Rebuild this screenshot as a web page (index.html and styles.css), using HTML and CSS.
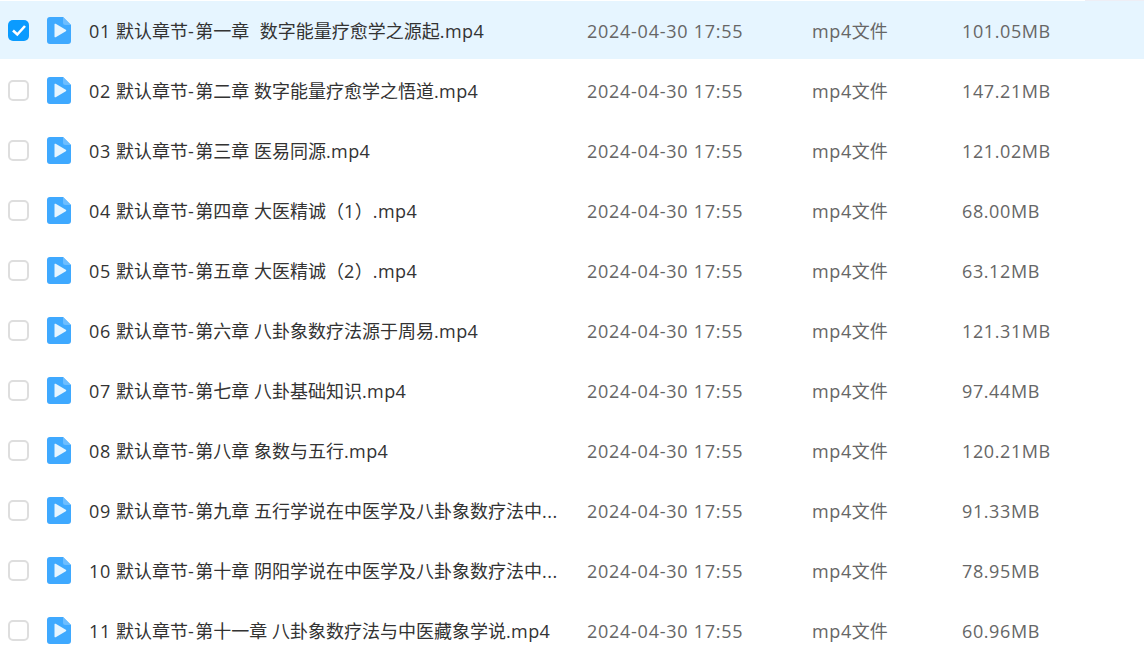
FILE: index.html
```html
<!DOCTYPE html>
<html lang="zh">
<head>
<meta charset="utf-8">
<title>文件列表</title>
<link rel="stylesheet" href="styles.css">
</head>
<body>
<svg class="defs" width="0" height="0" aria-hidden="true"><defs>
<symbol id="file" viewBox="0 0 24 27"><path d="M3 0H16L24 8V24a3 3 0 0 1-3 3H3a3 3 0 0 1-3-3V3a3 3 0 0 1 3-3Z" fill="#3fa9ff"/><path d="M16 0L24 8H18.500a2.500 2.500 0 0 1-2.500-2.500Z" fill="#6dbdff"/><path d="M7.500 7.500a.8.8 0 0 1 1.200-.7L18.800 12.800a.8.8 0 0 1 0 1.400L8.700 20.200a.8.800 0 0 1-1.200-.7Z" fill="#e8f5ff"/></symbol>
</defs></svg>
<main class="list">
<div class="row selected"><span class="check checked"><svg viewBox="0 0 20 20" width="20" height="20"><path d="M4 10.500L8.300 14.500L16 6" fill="none" stroke="#fff" stroke-width="2.600"/></svg></span><svg class="icon"><use href="#file"/></svg><span class="name"><span class="lat">01 </span>默认章节<span class="dash">-</span>第一章<span class="lat">  </span>数字能量疗愈学之源起<span class="ext">.mp4</span></span><span class="time lat">2024-04-30 17:55</span><span class="type"><span class="lat">mp4</span>文件</span><span class="size lat">101.05MB</span></div>
<div class="row"><span class="check"></span><svg class="icon"><use href="#file"/></svg><span class="name"><span class="lat">02 </span>默认章节<span class="dash">-</span>第二章 数字能量疗愈学之悟道<span class="ext">.mp4</span></span><span class="time lat">2024-04-30 17:55</span><span class="type"><span class="lat">mp4</span>文件</span><span class="size lat">147.21MB</span></div>
<div class="row"><span class="check"></span><svg class="icon"><use href="#file"/></svg><span class="name"><span class="lat">03 </span>默认章节<span class="dash">-</span>第三章 医易同源<span class="ext">.mp4</span></span><span class="time lat">2024-04-30 17:55</span><span class="type"><span class="lat">mp4</span>文件</span><span class="size lat">121.02MB</span></div>
<div class="row"><span class="check"></span><svg class="icon"><use href="#file"/></svg><span class="name"><span class="lat">04 </span>默认章节<span class="dash">-</span>第四章 大医精诚（<span class="lat">1</span>）<span class="ext">.mp4</span></span><span class="time lat">2024-04-30 17:55</span><span class="type"><span class="lat">mp4</span>文件</span><span class="size lat">68.00MB</span></div>
<div class="row"><span class="check"></span><svg class="icon"><use href="#file"/></svg><span class="name"><span class="lat">05 </span>默认章节<span class="dash">-</span>第五章 大医精诚（<span class="lat">2</span>）<span class="ext">.mp4</span></span><span class="time lat">2024-04-30 17:55</span><span class="type"><span class="lat">mp4</span>文件</span><span class="size lat">63.12MB</span></div>
<div class="row"><span class="check"></span><svg class="icon"><use href="#file"/></svg><span class="name"><span class="lat">06 </span>默认章节<span class="dash">-</span>第六章 八卦象数疗法源于周易<span class="ext">.mp4</span></span><span class="time lat">2024-04-30 17:55</span><span class="type"><span class="lat">mp4</span>文件</span><span class="size lat">121.31MB</span></div>
<div class="row"><span class="check"></span><svg class="icon"><use href="#file"/></svg><span class="name"><span class="lat">07 </span>默认章节<span class="dash">-</span>第七章 八卦基础知识<span class="ext">.mp4</span></span><span class="time lat">2024-04-30 17:55</span><span class="type"><span class="lat">mp4</span>文件</span><span class="size lat">97.44MB</span></div>
<div class="row"><span class="check"></span><svg class="icon"><use href="#file"/></svg><span class="name"><span class="lat">08 </span>默认章节<span class="dash">-</span>第八章 象数与五行<span class="ext">.mp4</span></span><span class="time lat">2024-04-30 17:55</span><span class="type"><span class="lat">mp4</span>文件</span><span class="size lat">120.21MB</span></div>
<div class="row"><span class="check"></span><svg class="icon"><use href="#file"/></svg><span class="name"><span class="lat">09 </span>默认章节<span class="dash">-</span>第九章 五行学说在中医学及八卦象数疗法中<span class="lat">...</span></span><span class="time lat">2024-04-30 17:55</span><span class="type"><span class="lat">mp4</span>文件</span><span class="size lat">91.33MB</span></div>
<div class="row"><span class="check"></span><svg class="icon"><use href="#file"/></svg><span class="name"><span class="lat">10 </span>默认章节<span class="dash">-</span>第十章 阴阳学说在中医学及八卦象数疗法中<span class="lat">...</span></span><span class="time lat">2024-04-30 17:55</span><span class="type"><span class="lat">mp4</span>文件</span><span class="size lat">78.95MB</span></div>
<div class="row"><span class="check"></span><svg class="icon"><use href="#file"/></svg><span class="name"><span class="lat">11 </span>默认章节<span class="dash">-</span>第十一章 八卦象数疗法与中医藏象学说<span class="ext">.mp4</span></span><span class="time lat">2024-04-30 17:55</span><span class="type"><span class="lat">mp4</span>文件</span><span class="size lat">60.96MB</span></div>
</main>
</body>
</html>
```
FILE: styles.css
```css
* { box-sizing: border-box; }
html, body { margin: 0; height: 100%; overflow: hidden; background: #fff; }
body { font-family: "Open Sans", "Noto Sans CJK SC", sans-serif; font-size: 18px; color: #666; }
.defs { position: absolute; }
.lat { letter-spacing: .6px; }
.dash { letter-spacing: 1.4px; }
.ext { letter-spacing: .4px; }
.list { display: flex; flex-direction: column; gap: 2px; padding-top: 1px; }
.list::before { content: ""; position: absolute; top: 0; right: 0; width: 59px; height: 1px; background: #eeeef5; }
.row { flex: none; height: 58px; display: flex; align-items: center; padding-left: 8px; }
.selected { background: #e6f5ff; }
.check { flex: none; width: 21px; height: 21px; border: 2px solid #dedede; border-radius: 5px; background: #fff; margin-right: 18px; display: flex; align-items: center; justify-content: center; }
.checked { background: #0a9bff; border: 0; }
.icon { flex: none; width: 24px; height: 27px; margin-right: 18px; }
.name { flex: none; width: 480px; margin-right: 18px; color: #333; white-space: pre; }
.time { flex: none; width: 225px; padding-top: 2px; letter-spacing: .73px; }
.type { flex: none; width: 150px; }
.size { flex: none; padding-top: 2px; }
```
